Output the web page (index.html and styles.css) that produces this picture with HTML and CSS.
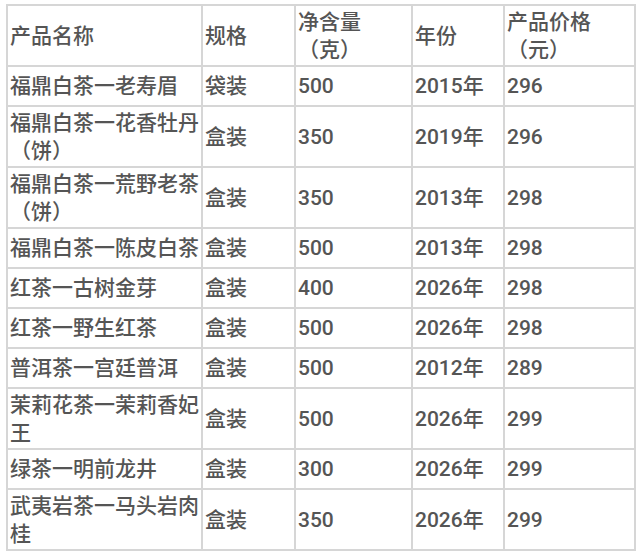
FILE: index.html
```html
<!DOCTYPE html>
<html lang="zh-CN">
<head>
<meta charset="utf-8">
<title>茶叶产品价格表</title>
<link rel="stylesheet" href="styles.css">
</head>
<body>
<table class="price-table">
  <colgroup>
    <col class="c-name">
    <col class="c-spec">
    <col class="c-weight">
    <col class="c-year">
    <col class="c-price">
  </colgroup>
  <thead>
    <tr>
      <th>产品名称</th>
      <th>规格</th>
      <th>净含量（克）</th>
      <th>年份</th>
      <th>产品价格（元）</th>
    </tr>
  </thead>
  <tbody>
    <tr><td>福鼎白茶一老寿眉</td><td>袋装</td><td>500</td><td>2015年</td><td>296</td></tr>
    <tr><td>福鼎白茶一花香牡丹（饼）</td><td>盒装</td><td>350</td><td>2019年</td><td>296</td></tr>
    <tr><td>福鼎白茶一荒野老茶（饼）</td><td>盒装</td><td>350</td><td>2013年</td><td>298</td></tr>
    <tr><td>福鼎白茶一陈皮白茶</td><td>盒装</td><td>500</td><td>2013年</td><td>298</td></tr>
    <tr><td>红茶一古树金芽</td><td>盒装</td><td>400</td><td>2026年</td><td>298</td></tr>
    <tr><td>红茶一野生红茶</td><td>盒装</td><td>500</td><td>2026年</td><td>298</td></tr>
    <tr><td>普洱茶一宫廷普洱</td><td>盒装</td><td>500</td><td>2012年</td><td>289</td></tr>
    <tr><td>茉莉花茶一茉莉香妃王</td><td>盒装</td><td>500</td><td>2026年</td><td>299</td></tr>
    <tr><td>绿茶一明前龙井</td><td>盒装</td><td>300</td><td>2026年</td><td>299</td></tr>
    <tr><td>武夷岩茶一马头岩肉桂</td><td>盒装</td><td>350</td><td>2026年</td><td>299</td></tr>
  </tbody>
</table>
</body>
</html>
```

FILE: styles.css
```css
html, body {
  margin: 0;
  padding: 0;
  background: #ffffff;
}

body {
  padding: 4px 0 0 6px;
  font-family: Roboto, "Noto Sans CJK SC", sans-serif;
  font-size: 21px;
  font-weight: 500;
  color: #555555;
}

.price-table {
  border-collapse: collapse;
  table-layout: fixed;
  width: 628px;
}

.c-name { width: 195px; }
.c-spec { width: 93px; }
.c-weight { width: 117px; }
.c-year { width: 92px; }
.c-price { width: 131px; }

.price-table th,
.price-table td {
  border: 2px solid #d6d6d6;
  padding: 1.5px 0 1.5px 2px;
  line-height: 28px;
  font-weight: 500;
  text-align: left;
  vertical-align: middle;
}

.price-table tr {
  height: 40px;
}
```
